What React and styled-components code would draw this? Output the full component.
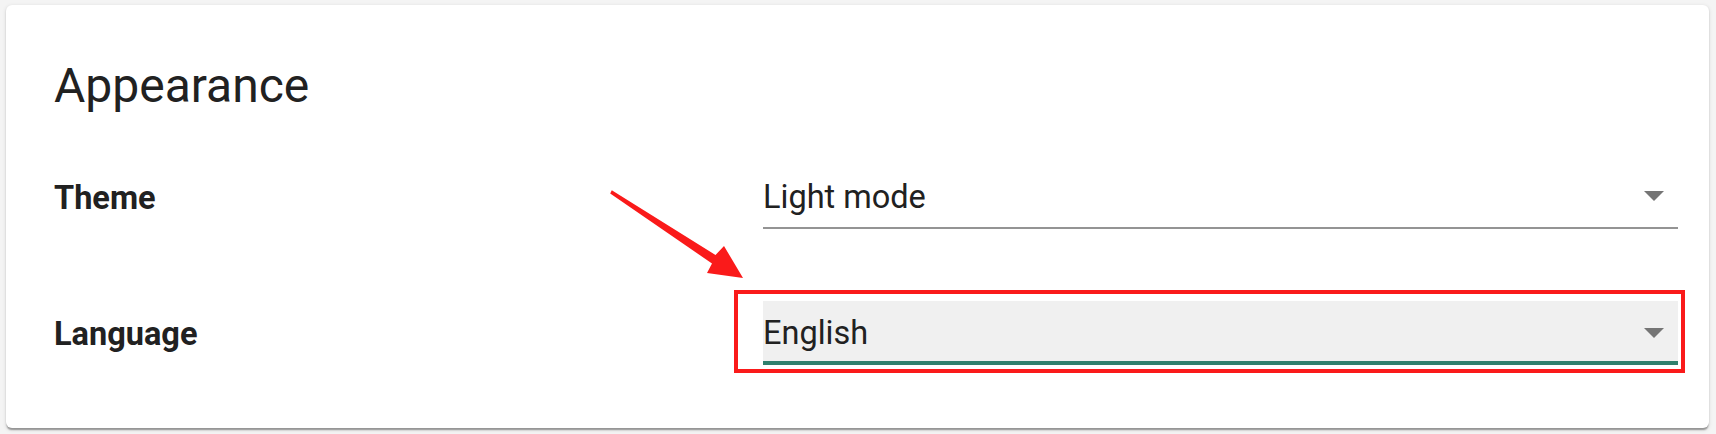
import React from "react";
import styled, { createGlobalStyle } from "styled-components";

const Global = createGlobalStyle`
  html, body { margin: 0; padding: 0; background: #f4f4f4; }
  body { font-family: Roboto, "Noto Sans", Arial, sans-serif; }
`;

const Page = styled.div`
  position: relative;
  width: 1716px;
  height: 434px;
  box-sizing: border-box;
  padding: 5px 7px 6px 6px;
`;

const Card = styled.section`
  position: relative;
  background: #fff;
  border-radius: 6px;
  box-shadow: 0 3px 1.5px -1.5px rgba(0, 0, 0, 0.22),
    0 1.5px 1.5px 0 rgba(0, 0, 0, 0.14), 0 1.5px 4.5px 0 rgba(0, 0, 0, 0.12);
  padding: 53px 31px 63px 48px;
  display: flex;
  flex-direction: column;
`;

const Title = styled.h2`
  margin: 0 0 51px 0;
  font-weight: 400;
  font-size: 48px;
  line-height: 56px;
  color: #212121;
`;

const Rows = styled.div`
  display: flex;
  flex-direction: column;
  gap: 72px;
`;

const Row = styled.div`
  display: grid;
  grid-template-columns: 709px 1fr;
  align-items: center;
`;

const Label = styled.div`
  font-weight: 700;
  font-size: 32.5px;
  line-height: 38px;
  color: #212121;
  padding-top: 2px;
`;

const FieldWrap = styled.div`
  position: relative;
`;

const Field = styled.div`
  box-sizing: border-box;
  height: 64px;
  display: flex;
  align-items: center;
  justify-content: space-between;
  padding: 0 14px 0 0;
  background: ${(p) => (p.$focused ? "#f0f0f0" : "transparent")};
  border-bottom: ${(p) => (p.$focused ? "4px solid #2f806d" : "2px solid #949494")};
  font-size: 32.5px;
  line-height: 38px;
  color: #212121;
`;

const Value = styled.span`
  padding-top: ${(p) => (p.$focused ? "4px" : "2px")};
`;

const Caret = styled.span`
  width: 0;
  height: 0;
  border-left: 10px solid transparent;
  border-right: 10px solid transparent;
  border-top: 10px solid #757575;
  margin-top: ${(p) => (p.$focused ? "4px" : "0")};
`;

const Highlight = styled.div`
  position: absolute;
  top: -11px;
  bottom: -8px;
  left: -29px;
  right: -7px;
  border: 4px solid #fa1a1a;
  pointer-events: none;
`;

const ArrowLayer = styled.svg`
  position: absolute;
  left: 0;
  top: 0;
  pointer-events: none;
`;

function Select({ value, focused }) {
  return (
    <Field $focused={focused}>
      <Value $focused={focused}>{value}</Value>
      <Caret $focused={focused} />
    </Field>
  );
}

export default function App() {
  return (
    <Page>
      <Global />
      <Card>
        <Title>Appearance</Title>
        <Rows>
          <Row>
            <Label>Theme</Label>
            <FieldWrap>
              <Select value="Light mode" />
            </FieldWrap>
          </Row>
          <Row>
            <Label>Language</Label>
            <FieldWrap>
              <Select value="English" focused />
              <Highlight />
            </FieldWrap>
          </Row>
        </Rows>
      </Card>
      <ArrowLayer width="1716" height="434" viewBox="0 0 1716 434">
        <polygon
          fill="#fa1a1a"
          points="611.8,190.3 715.5,255 724,246 743,278 707,273 712,263.5 610.2,193.5"
        />
      </ArrowLayer>
    </Page>
  );
}
